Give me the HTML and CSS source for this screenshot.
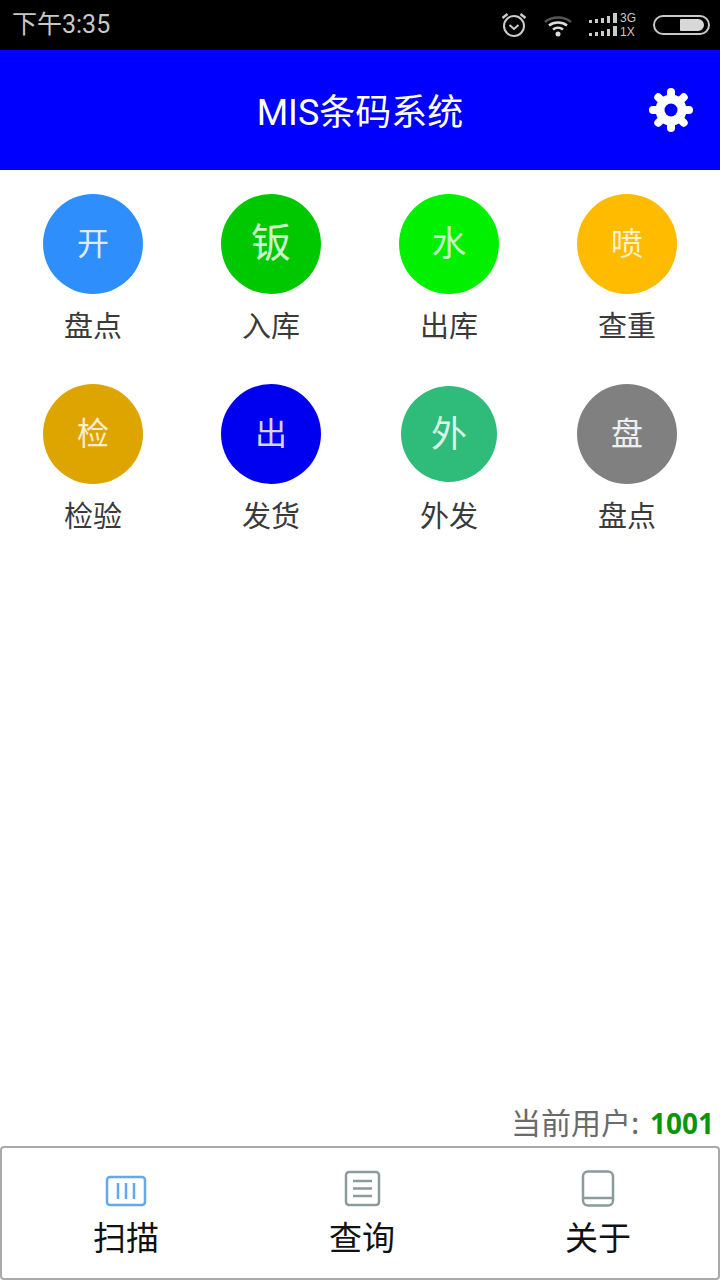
FILE: index.html
```html
<!DOCTYPE html>
<html>
<head>
  <meta charset="utf-8">
  <link rel="stylesheet" href="styles.css">
</head>
<body>
  <!-- status bar -->
  <div class="status-bar">
    <span class="status-time">下午3:35</span>
    <div class="status-icons">
      <svg class="ic-alarm" width="28" height="28" viewBox="0 0 28 28" fill="none" stroke="#ccc">
        <circle cx="14" cy="15" r="10" stroke-width="2"/>
        <path d="M9.5 14l4.5 4 4.5-4" stroke-width="2"/>
        <path d="M2.5 7l5-4M25.500 7l-5-4" stroke-width="2.500"/>
      </svg>
      <svg class="ic-wifi" width="30" height="26" viewBox="0 0 30 26" fill="none">
        <path d="M2 10c7-6 19-6 26 0" stroke="#555" stroke-width="2.500"/>
        <path d="M6 13.500c5-4 13-4 18 0" stroke="#ddd" stroke-width="2.500"/>
        <path d="M10 17.500c3-2.500 7-2.500 10 0" stroke="#ddd" stroke-width="2.500"/>
        <circle cx="15" cy="22" r="2.500" fill="#ddd"/>
      </svg>
      <svg class="ic-signal" width="30" height="24" viewBox="0 0 30 24" fill="#ccc">
        <rect x="1" y="7" width="3" height="3"/><rect x="7" y="6" width="3" height="4"/><rect x="13" y="5" width="3" height="5"/><rect x="19" y="3" width="3" height="7"/><rect x="25" y="0" width="4" height="10"/>
        <rect x="1" y="20" width="3" height="3"/><rect x="7" y="19" width="3" height="4"/><rect x="13" y="18" width="3" height="5"/><rect x="19" y="16" width="3" height="7"/><rect x="25" y="13" width="4" height="10"/>
      </svg>
      <div class="net-type"><span>3G</span><span>1X</span></div>
      <div class="battery"><div class="battery-level"></div></div>
    </div>
  </div>

  <!-- header -->
  <div class="app-header">
    <h1>MIS条码系统</h1>
    <svg class="ic-gear" width="48" height="48" viewBox="0 0 48 48">
      <g fill="#fff">
        <rect x="20" y="2" width="8" height="44" rx="4"/>
        <rect x="20" y="2" width="8" height="44" rx="4" transform="rotate(45 24 24)"/>
        <rect x="20" y="2" width="8" height="44" rx="4" transform="rotate(90 24 24)"/>
        <rect x="20" y="2" width="8" height="44" rx="4" transform="rotate(135 24 24)"/>
      </g>
      <circle cx="24" cy="24" r="11" fill="none" stroke="#fff" stroke-width="9"/>
      <circle cx="24" cy="24" r="6.500" fill="#00f"/>
    </svg>
  </div>

  <!-- menu -->
  <div class="menu-grid">
    <div class="menu-item"><div class="circle c-blue">开</div><p>盘点</p></div>
    <div class="menu-item"><div class="circle big c-green">钣</div><p>入库</p></div>
    <div class="menu-item"><div class="circle c-lime">水</div><p>出库</p></div>
    <div class="menu-item"><div class="circle c-amber">喷</div><p>查重</p></div>
    <div class="menu-item"><div class="circle c-gold">检</div><p>检验</p></div>
    <div class="menu-item"><div class="circle c-navy">出</div><p>发货</p></div>
    <div class="menu-item"><div class="circle small-disc c-teal">外</div><p>外发</p></div>
    <div class="menu-item"><div class="circle c-gray">盘</div><p>盘点</p></div>
  </div>

  <div class="current-user">当前用户: <b>1001</b></div>

  <!-- bottom tabs -->
  <div class="tab-bar">
    <div class="tab">
      <svg width="42" height="32" viewBox="0 0 42 32" fill="none" stroke="#64a8ee" stroke-width="2.500">
        <rect x="2" y="2" width="38" height="28" rx="3"/>
        <path d="M13 8v16M21 8v16M29 8v16"/>
      </svg>
      <span>扫描</span>
    </div>
    <div class="tab">
      <svg width="42" height="38" viewBox="0 0 42 38" fill="none" stroke="#8b9a9a" stroke-width="2.500">
        <rect x="5" y="3" width="33" height="33" rx="3"/>
        <path d="M12 12h19M12 19.500h19M12 27h19"/>
      </svg>
      <span>查询</span>
    </div>
    <div class="tab">
      <svg width="42" height="38" viewBox="0 0 42 38" fill="none" stroke="#8b9a9a" stroke-width="2.500">
        <rect x="6" y="2.500" width="30" height="34" rx="5"/>
        <path d="M6 29h30"/>
      </svg>
      <span>关于</span>
    </div>
  </div>
</body>
</html>
```
FILE: styles.css
```css
* {
  box-sizing: border-box;
}

body {
  margin: 0;
  width: 720px;
  height: 1280px;
  display: flex;
  flex-direction: column;
  background-color: #fff;
  font-family: "Noto Sans CJK SC", "Noto Sans", sans-serif;
  overflow: hidden;
}

.status-bar {
  height: 50px;
  flex-shrink: 0;
  background-color: #000;
  color: #c8c8c8;
  display: flex;
  align-items: center;
  justify-content: space-between;
  padding: 0 10px 0 12px;
}

.status-time {
  font-family: Roboto, "Noto Sans CJK SC", sans-serif;
  font-size: 25px;
  line-height: 50px;
}

.status-icons {
  display: flex;
  align-items: center;
}

.ic-wifi {
  margin-left: 15px;
}

.ic-signal {
  margin-left: 15px;
}

.net-type {
  display: flex;
  flex-direction: column;
  margin-left: 2px;
  width: 22px;
  font-family: "Liberation Sans", sans-serif;
  font-size: 12px;
  line-height: 14px;
  color: #c8c8c8;
}

.battery {
  width: 57px;
  height: 20px;
  margin-left: 11px;
  border: 2px solid #c8c8c8;
  border-radius: 10px;
  padding: 2px 4px;
  display: flex;
  justify-content: flex-end;
}

.battery-level {
  width: 24px;
  background-color: #d8d8d8;
  border-radius: 1px 6px 6px 1px;
}

.app-header {
  position: relative;
  height: 120px;
  flex-shrink: 0;
  background-color: #00f;
  display: flex;
  align-items: center;
  justify-content: center;
}

.app-header h1 {
  margin: 0;
  color: #fff;
  font-family: Roboto, "Noto Sans CJK SC", sans-serif;
  font-size: 36px;
  font-weight: 400;
  line-height: 50px;
  padding-top: 5px;
}

.ic-gear {
  position: absolute;
  right: 25px;
  top: 36px;
}

.menu-grid {
  display: grid;
  grid-template-columns: repeat(4, 178px);
  grid-auto-rows: 190px;
  padding: 24px 4px 0;
}

.menu-item {
  display: flex;
  flex-direction: column;
  align-items: center;
}

.menu-item p {
  margin: 10px 0 0;
  font-size: 29px;
  line-height: 40px;
  color: #3a3a3a;
}

.circle {
  width: 100px;
  height: 100px;
  border-radius: 50%;
  display: flex;
  align-items: center;
  justify-content: center;
  color: #fff;
  font-size: 32px;
  padding-bottom: 7px;
}

.circle.big {
  font-size: 40px;
  padding-bottom: 9px;
}

.circle.small-disc {
  font-size: 36px;
  width: 96px;
  height: 96px;
  margin: 2px 0;
}

.c-blue { background-color: #2e8ffc; color: #dcecff; }
.c-green { background-color: #00c800; color: #cdf5cd; }
.c-lime { background-color: #00f000; color: #c4f8c4; font-size: 35px; }
.c-amber { background-color: #ffbb00; color: #fff2cc; }
.c-gold { background-color: #dea500; color: #fbeecb; }
.c-navy { background-color: #0000f0; color: #d4d4fa; }
.c-teal { background-color: #2fbb7a; color: #d8f4e6; }
.c-gray { background-color: #808080; color: #eee; }

.current-user {
  margin-top: auto;
  padding: 0 6px 0 0;
  height: 50px;
  text-align: right;
  font-size: 30px;
  line-height: 50px;
  color: #6a6a6a;
}

.current-user b {
  margin-left: 4px;
  font-family: "Open Sans", sans-serif;
  font-size: 28px;
  font-weight: 700;
  color: #0a960a;
}

.tab-bar {
  height: 134px;
  flex-shrink: 0;
  border: 2px solid #aaa;
  border-radius: 4px;
  padding: 0 2px 0 6px;
  display: flex;
}

.tab {
  flex: 1;
  display: flex;
  flex-direction: column;
  align-items: center;
  justify-content: flex-end;
  height: 112px;
  gap: 5px;
}

.tab span {
  font-size: 33px;
  line-height: 48px;
  color: #111;
}
```
